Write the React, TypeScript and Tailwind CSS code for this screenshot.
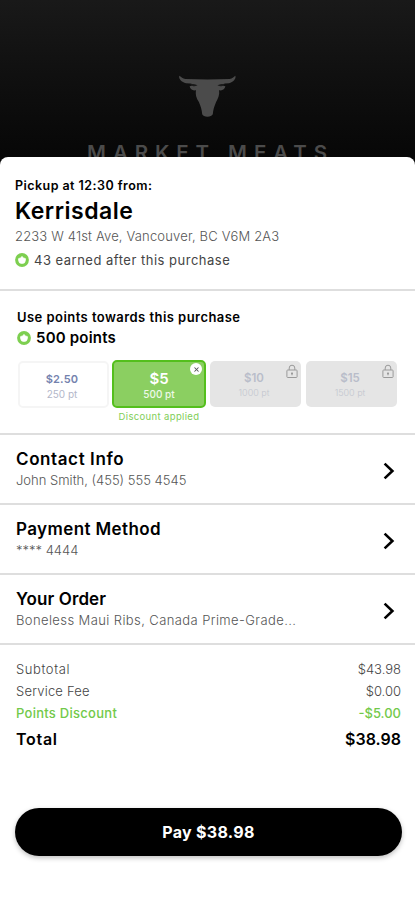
import { X } from 'lucide-react'
import clsx from 'clsx'

interface Reward {
  value: string
  points: string
  state: 'available' | 'applied' | 'locked'
}

const REWARDS: Reward[] = [
  { value: '$2.50', points: '250 pt', state: 'available' },
  { value: '$5', points: '500 pt', state: 'applied' },
  { value: '$10', points: '1000 pt', state: 'locked' },
  { value: '$15', points: '1500 pt', state: 'locked' },
]

const ROWS = [
  { title: 'Contact Info', detail: 'John Smith, (455) 555 4545', titleClass: 'tracking-[0.6px]', detailClass: '' },
  { title: 'Payment Method', detail: '**** 4444', titleClass: 'tracking-[0.4px]', detailClass: '' },
  {
    title: 'Your Order',
    detail: 'Boneless Maui Ribs, Canada Prime-Grade...',
    titleClass: 'tracking-[0.1px]',
    detailClass: 'tracking-[0.4px]',
  },
]

function BullLogo() {
  return (
    <svg viewBox="355 45 178 130" className="h-[43px] w-[59px] shrink-0" fill="#4b4b4b">
      <path d="M359 47 C365 51 369 55 377 57 Q444 60 511 57 C519 55 523 51 528 47 C532 55 521 67 509 70 L497 71 C490 73 486 74 484 75 L498 79 C496 89 489 93 479 91 C481 104 476 116 470 127 C465 139 461 150 460 164 Q456 171 444 171 Q431 171 428 164 C427 150 423 139 418 127 C410 115 407 104 409 91 C399 93 392 89 390 79 L404 75 C400 74 397 72 392 71 L379 70 C366 67 355 55 359 47 Z" />
      <path d="M391 73 Q402 71 414 76 Q406 80 399 78 Z M497 73 Q486 71 474 76 Q482 80 489 78 Z" fill="#1b1b1b" />
    </svg>
  )
}

function PointsIcon() {
  return (
    <svg viewBox="0 0 14 14" className="h-3.5 w-3.5 shrink-0">
      <circle cx="7" cy="7" r="6.9" fill="#7dcf50" />
      <path
        d="M7 3.5 L8.5 4.9 L10.5 5.7 L10.2 8 L9.4 9.9 L7 10.4 L4.6 9.9 L3.8 8 L3.5 5.7 L5.5 4.9 Z"
        fill="#fff"
        stroke="#fff"
        strokeWidth="0.8"
        strokeLinejoin="round"
      />
    </svg>
  )
}

function LockIcon() {
  return (
    <svg viewBox="0 0 12 15" className="absolute top-[3px] right-[3px] h-[15px] w-3" fill="none" stroke="#9a9a9a">
      <rect x="0.9" y="6" width="10.2" height="7.5" rx="0.8" />
      <path d="M3.2 6V4a2.8 2.8 0 0 1 5.6 0v2" />
      <path d="M6 8.5v2.8M5 9.4h2" strokeWidth="1.2" />
    </svg>
  )
}

function Chevron() {
  return (
    <svg viewBox="0 0 12 18" className="mt-1 mr-1.5 h-[18px] w-3" fill="none" stroke="#000" strokeWidth="2.6">
      <path d="M1.6 1.6 L9.4 9 L1.6 16.4" />
    </svg>
  )
}

function RewardCard({ value, points, state }: Reward) {
  const applied = state === 'applied'
  const locked = state === 'locked'
  return (
    <div
      className={clsx(
        'relative flex flex-col items-center rounded-[5px]',
        state === 'available' && 'mt-px mr-[3px] h-[47px] w-[91px] border-2 border-[#f5f5f5] bg-white pt-2 pr-[3px]',
        applied && 'mr-1 h-12 w-[94px] border-2 border-[#54bf1c] bg-[#8bcf61] pt-[9px]',
        locked && 'mt-px mr-[5px] h-[46px] w-[91px] bg-[#e5e5e5] pt-[9px] pr-[3px]',
      )}
    >
      <span
        className={clsx(
          'leading-4 font-semibold',
          state === 'available' && 'text-[11px] tracking-[0.2px] text-[#7482ae]',
          applied && 'text-[15px] text-white',
          locked && 'text-[11.5px] text-[#b9bdca]',
        )}
      >
        {value}
      </span>
      <span
        className={clsx(
          'leading-[14px]',
          state === 'available' && 'text-[10px] text-[#b3b7c9]',
          applied && 'text-[10px] font-medium text-[#eef9e8]',
          locked && 'text-[9px] font-light text-[#c3c6cf]',
        )}
      >
        {points}
      </span>
      {applied && (
        <span className="absolute top-[1px] right-[2px] flex h-3 w-3 items-center justify-center rounded-full bg-white">
          <X className="h-[7px] w-[7px] text-[#555]" strokeWidth={3.5} />
        </span>
      )}
      {applied && (
        <span className="absolute top-[48px] left-1/2 -translate-x-1/2 text-[9.5px] leading-[14px] tracking-[0.35px] whitespace-nowrap text-[#7fce59]">
          Discount applied
        </span>
      )}
      {locked && <LockIcon />}
    </div>
  )
}

export default function App() {
  return (
    <div className="h-[900px] w-[415px] overflow-hidden bg-black font-['Inter','Liberation_Sans',sans-serif] text-black">
      <header className="flex h-[169px] flex-col items-center bg-linear-to-b from-[#191919] to-[#060606] pt-[75px]">
        <BullLogo />
        <div className="mt-[22px] pl-1.5 text-[20.5px] leading-[26px] font-semibold tracking-[6.9px] whitespace-nowrap text-[#4b4b4b]">
          MARKET MEATS
        </div>
      </header>

      {/* sheet slides over the bottom of the store header */}
      <main className="relative -mt-3 h-[743px] rounded-t-[8px] bg-white">
        <section className="h-[134px] border-b-2 border-[#dedede] px-[15px] pt-[19px]">
          <p className="text-[12.5px] leading-5 font-semibold tracking-[0.45px]">Pickup at 12:30 from:</p>
          <h1 className="text-[23px] leading-[30px] font-semibold tracking-[0.5px]">Kerrisdale</h1>
          <p className="text-[13px] leading-5 font-light tracking-[0.17px] whitespace-nowrap text-[#555]">
            2233 W 41st Ave, Vancouver, BC V6M 2A3
          </p>
          <p className="mt-0.5 flex items-center gap-[5px] text-[13px] leading-6 tracking-[0.5px] text-[#444]">
            <PointsIcon />
            43 earned after this purchase
          </p>
        </section>

        <section className="h-[144px] border-b-2 border-[#dedede] pt-4 pl-[17px]">
          <h2 className="text-[13px] leading-5 font-semibold tracking-[0.45px]">Use points towards this purchase</h2>
          <p className="mt-px flex items-center gap-[5px] text-[15px] leading-5 font-semibold tracking-[0.2px]">
            <PointsIcon />
            500 points
          </p>
          <div className="mt-3 ml-px flex">
            {REWARDS.map((reward) => (
              <RewardCard key={reward.value} {...reward} />
            ))}
          </div>
        </section>

        {ROWS.map((row) => (
          <section
            key={row.title}
            className="flex h-[70px] items-center justify-between border-b-2 border-[#dedede] pr-[14px] pl-4"
          >
            <div>
              <h2 className={clsx('text-[17px] leading-[22px] font-semibold', row.titleClass)}>{row.title}</h2>
              <p className={clsx('text-[13px] leading-5 font-light text-[#555]', row.detailClass)}>{row.detail}</p>
            </div>
            <Chevron />
          </section>
        ))}

        <section className="px-4 pt-[14px] text-[13px] font-light text-[#444]">
          <div className="flex h-[22px] items-center justify-between">
            <span className="tracking-[0.6px]">Subtotal</span>
            <span className="-mr-[2px]">$43.98</span>
          </div>
          <div className="flex h-[22px] items-center justify-between">
            <span className="tracking-[0.2px]">Service Fee</span>
            <span className="-mr-[2px]">$0.00</span>
          </div>
          <div className="flex h-[22px] items-center justify-between font-medium text-[#72c94a]">
            <span className="tracking-[0.27px]">Points Discount</span>
            <span className="-mr-[2px]">-$5.00</span>
          </div>
          <div className="flex h-7 items-center justify-between text-[16px] font-semibold text-black">
            <span className="tracking-[0.7px]">Total</span>
            <span className="-mr-[2px]">$38.98</span>
          </div>
        </section>

        <button className="mt-[55px] ml-[15px] flex h-[48px] w-[387px] items-center justify-center rounded-full bg-black text-[16px] font-bold tracking-[0.3px] text-white shadow-[0_2px_5px_rgba(0,0,0,0.25)]">
          Pay $38.98
        </button>
      </main>
    </div>
  )
}
